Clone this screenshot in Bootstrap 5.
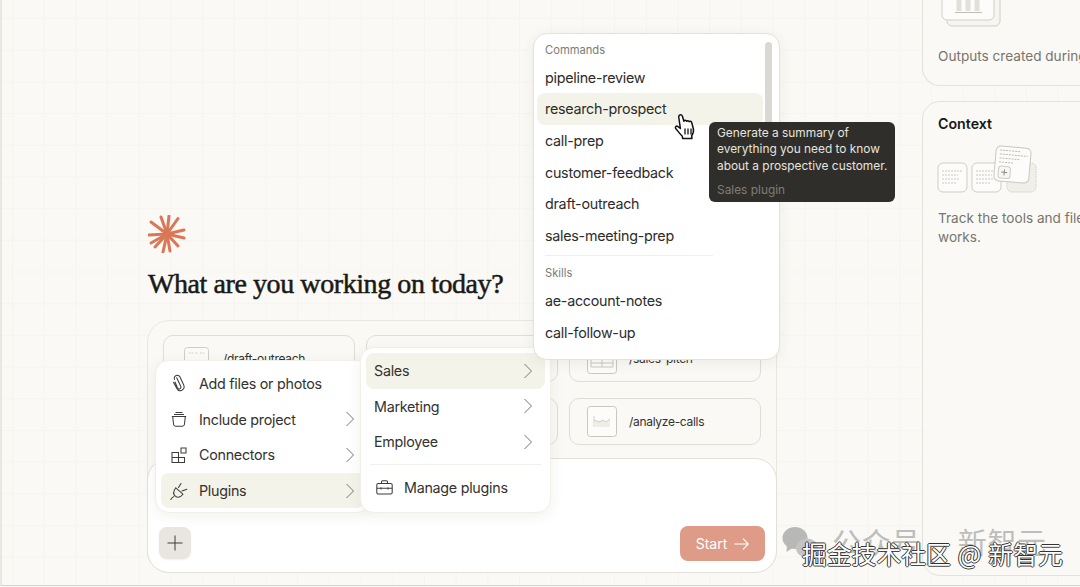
<!doctype html>
<html lang="en">
<head>
<meta charset="utf-8">
<title>What are you working on today?</title>
<link rel="stylesheet" href="https://cdn.jsdelivr.net/npm/bootstrap@5.3.0/dist/css/bootstrap.min.css">
<style>
html,body{height:587px;overflow:hidden}
body{background:#faf9f5;font-family:Inter,"Noto Sans",sans-serif;color:#2b2a27}
.page{width:1080px;height:586px;border-left:2px solid #e9e7e1;border-bottom:1px solid #d6d4ce;overflow:hidden;position:relative;
 background-color:#faf9f5;
 background-image:linear-gradient(#f5f4ef 1.2px,transparent 1.2px),linear-gradient(90deg,#f5f4ef 1.2px,transparent 1.2px);
 background-size:31.7px 31.7px;background-position:10px 18px}
.left-col{width:920px;padding-left:145px;flex:none}
.star{display:block;width:38px;height:38px;margin:215px 0 0 1px}
.hero-title{font-family:"Liberation Serif",serif;font-size:28px;line-height:34px;font-weight:400;color:#191917;margin:14px 0 0 1px;letter-spacing:-.42px;-webkit-text-stroke:.5px #191917}
.panel{width:630px;margin-top:19px;border:1px solid #e9e7e0;border-radius:22px;background:#faf9f5;position:relative}
.tiles{display:grid;grid-template-columns:repeat(3,192px);column-gap:11px;row-gap:16px;padding:14px 15px 13px 15px}
.tile{height:47px;border:1px solid #dfddd6;border-radius:10px;display:flex;align-items:center;gap:12px;padding-left:17px;font-size:12px;letter-spacing:-.3px;color:#33322f}
.tile svg{flex:none}
.composer{height:115px;margin:0 -1px -1px;background:#fff;border:1px solid #e2e0d9;border-radius:22px;padding:68px 11px 0;display:flex;justify-content:space-between;align-items:flex-start}
.plus-btn{width:32px;height:32px;background:#e9e6df;border-radius:8px;display:flex;align-items:center;justify-content:center;box-shadow:0 1px 2px rgba(0,0,0,.06)}
.start-btn{width:85px;height:35px;background:#de9c88;border:0;border-radius:8px;color:#fff;font-size:14px;display:flex;align-items:center;justify-content:center;gap:7px;margin-top:-1px;padding:0}
.pop{position:absolute;background:#fff;border-radius:14px;box-shadow:0 3px 14px rgba(60,50,30,.07);border:1px solid #f1efe9}
.menu-a{left:7px;top:39px;width:216px;height:153px;padding:5px;z-index:2}
.menu-b{left:212px;top:26px;width:191px;height:166px;padding:5px;z-index:3}
.menu-c{left:385px;top:-288px;width:247px;height:327px;border-color:#e4e2db;z-index:4;padding:7.5px 3px 7px}
.mi{height:35.6px;border-radius:8px;display:flex;align-items:center;font-size:14.3px;color:#33322f;letter-spacing:-.27px}
.mi-a{padding:0 10px 0 8px;gap:10px}
.mi-a .lbl{flex-grow:1}
.mi-b{padding:0 12px 0 8px;justify-content:space-between}
.hl{background:#f4f3ea}
.sub-div{height:1px;background:#f1efea;margin:4px 4px 5px}
.manage{height:36px;padding-left:10px;gap:11px;justify-content:flex-start}
.cmd-head{font-size:11.2px;line-height:16px;color:#7d7b74;padding-left:8px}
.cmd{height:31.7px;font-size:14.3px;letter-spacing:-.26px;display:flex;align-items:center;padding-left:8px;width:226px;border-radius:8px;color:#2d2c29}
.cmd-div{height:1px;background:#f1efea;width:168px;margin:3.500px 0 9px 8px}
.sbar{position:absolute;right:7px;top:8px;width:7px;height:100px;background:#d9d8d3;border-radius:4px}
.tip{position:absolute;left:175px;top:88px;width:186px;height:80px;background:#2f2e2b;border-radius:6px;color:#e6e4de;font-size:11.9px;line-height:16.4px;padding:3px 8px;z-index:5;white-space:nowrap}
.tip .src{color:#7f7d77;margin-top:8px}
.hand{position:absolute;left:139px;top:79px;z-index:6}
.right-col{width:400px;flex:none}
.side{background:#faf9f5;border:1px solid #e4e2db;border-radius:18px;padding:0 15px;width:300px}
.side-top{height:86px;border-top:0;border-top-left-radius:0;border-top-right-radius:0}
.side-main{height:475px;margin-top:15px;padding-top:13px}
.side-title{font-size:14.2px;font-weight:600;color:#171715;line-height:18px}
.side-text{font-size:13.6px;line-height:19.2px;color:#77756e;white-space:nowrap}
.side-top .side-text{margin-top:19px}
.side-main .side-text{margin-top:14px}
.side-top svg,.side-main svg{display:block}
.side-top svg{margin-left:2px}
.side-main svg{margin-top:12px;margin-left:-1px}
.wm{position:absolute;left:0;top:0;width:0;height:0;z-index:9}
.wm-gray{position:absolute;left:830px;top:521px;font-family:"Noto Sans CJK SC",sans-serif;font-size:29px;line-height:40px;color:#bdbdbc;white-space:nowrap;letter-spacing:.6px}
.wm-gray span{margin-left:37px}
.wm-main{position:absolute;left:800px;top:537px;font-family:"Noto Sans CJK SC",sans-serif;font-size:24.8px;line-height:32px;word-spacing:1.5px;color:#fff;white-space:nowrap;text-shadow:-1px 0 #333,1px 0 #333,0 -1px #333,0 1px #444}
.wm svg{position:absolute;left:780px;top:525px}
</style>
</head>
<body>
<div class="page d-flex">
 <div class="left-col">
  <svg class="star" viewBox="0 0 38 38" aria-hidden="true"><g stroke="#d97757" stroke-width="3" stroke-linecap="round"><line x1="19" y1="19" x2="13" y2="2"/><line x1="19" y1="19" x2="21" y2="1"/><line x1="19" y1="19" x2="30" y2="3.5"/><line x1="19" y1="19" x2="36" y2="15"/><line x1="19" y1="19" x2="36" y2="23"/><line x1="19" y1="19" x2="30" y2="31"/><line x1="19" y1="19" x2="22" y2="36"/><line x1="19" y1="19" x2="15" y2="37"/><line x1="19" y1="19" x2="7" y2="32"/><line x1="19" y1="19" x2="1" y2="20"/><line x1="19" y1="19" x2="3" y2="7"/><line x1="19" y1="19" x2="3" y2="28"/></g></svg>
  <h1 class="hero-title">What are you working on today?</h1>
  <div class="panel">
   <div class="tiles">
    <div class="tile"><svg width="30" height="30" viewBox="0 0 30 30" fill="none" stroke="#cfcdc6"><path d="M.5 20l3-4V6.500a3 3 0 0 1 3-3h18a3 3 0 0 1 3 3V16l2 4z" fill="#fbfaf7"/><path d="M8 9h4M14 9h3M19 9h4" stroke-dasharray="1.5 1"/></svg><span>/draft-outreach</span></div>
    <div class="tile"></div>
    <div class="tile"><svg width="30" height="31" viewBox="0 0 30 31" fill="none" stroke="#c9c7c0"><rect x=".5" y=".5" width="29" height="30" rx="3" fill="#fdfcfa"/><path d="M4 10h22v14H4zM4 15h22M4 20h22M15 15v9"/></svg><span>/sales-pitch</span></div>
    <div class="tile"></div>
    <div class="tile"></div>
    <div class="tile"><svg width="30" height="31" viewBox="0 0 30 31" fill="none" stroke="#c9c7c0"><rect x=".5" y=".5" width="29" height="30" rx="3" fill="#fdfcfa"/><path d="M7 21V10" stroke="#d5d3cd"/><path d="M7 21V14l5 2 4-2 3 2 4-3v8z" fill="#eeede8" stroke="none"/><path d="M7 14l5 2 4-2 3 2 4-3" stroke="#d0cec8"/></svg><span>/analyze-calls</span></div>
   </div>
   <div class="composer">
    <div class="plus-btn"><svg width="16" height="16" viewBox="0 0 16 16" stroke="#3d3d3a" fill="none"><path d="M8 .5v15M.5 8h15"/></svg></div>
    <button class="start-btn" type="button">Start <svg width="15" height="12" viewBox="0 0 15 12" fill="none" stroke="#fff" stroke-width="1.1"><path d="M.5 6h14M9 .7 14.3 6 9 11.3"/></svg></button>
   </div>

   <div class="pop menu-a">
    <div class="mi mi-a"><svg width="20" height="20" viewBox="0 0 20 20" fill="none" stroke="#3d3d3a" stroke-width="1.05" stroke-linecap="round"><path d="M5.600 5.400c-.9-1.700.2-3.300 1.600-3.900 1.500-.6 3 0 3.800 1.600l3.600 7.600c1 2.200.3 4.600-1.700 5.600-2 .9-4.300 0-5.300-2.200L4.500 8.300M7.700 3.800l4 8.400c.5 1.100.1 2.200-.8 2.600-1 .4-2-.1-2.500-1.100L6 8"/></svg><span class="lbl">Add files or photos</span></div>
    <div class="mi mi-a"><svg width="20" height="20" viewBox="0 0 20 20" fill="none" stroke="#3d3d3a" stroke-width="1.05"><path d="M2.800 7.500h14.400M3.700 7.500l.9 8a2 2 0 0 0 2 1.700h6.800a2 2 0 0 0 2-1.700l.9-8M5 5.500h10M6.500 3.500h7"/></svg><span class="lbl">Include project</span><svg width="10" height="16" viewBox="0 0 10 16" fill="none" stroke="#77756e"><path d="M1.500 1 8.500 8l-7 7"/></svg></div>
    <div class="mi mi-a"><svg width="20" height="20" viewBox="0 0 20 20" fill="none" stroke="#3d3d3a" stroke-width="1.05"><path d="M3 7.500h6.500v10H3zM3 12.500h12.500v5H9.500M9.500 12.500V17M12 3h5v5h-5z"/></svg><span class="lbl">Connectors</span><svg width="10" height="16" viewBox="0 0 10 16" fill="none" stroke="#77756e"><path d="M1.500 1 8.500 8l-7 7"/></svg></div>
    <div class="mi mi-a hl"><svg width="20" height="20" viewBox="0 0 20 20" fill="none" stroke="#3d3d3a" stroke-width="1.05" stroke-linecap="round"><path d="M1.800 18.500c1-1.800 1.800-2.300 3-2.900M6.800 6.800l7.200 6.400c-2.200 2.800-5.300 3.800-7.700 2-2.300-1.800-1.900-5.200.5-8.400zM9.500 6.500l2.500-4M13 10l4.800-1.700"/></svg><span class="lbl">Plugins</span><svg width="10" height="16" viewBox="0 0 10 16" fill="none" stroke="#77756e"><path d="M1.500 1 8.500 8l-7 7"/></svg></div>
   </div>

   <div class="pop menu-b">
    <div class="mi mi-b hl">Sales<svg width="10" height="16" viewBox="0 0 10 16" fill="none" stroke="#77756e"><path d="M1.500 1 8.500 8l-7 7"/></svg></div>
    <div class="mi mi-b">Marketing<svg width="10" height="16" viewBox="0 0 10 16" fill="none" stroke="#77756e"><path d="M1.500 1 8.500 8l-7 7"/></svg></div>
    <div class="mi mi-b">Employee<svg width="10" height="16" viewBox="0 0 10 16" fill="none" stroke="#77756e"><path d="M1.500 1 8.500 8l-7 7"/></svg></div>
    <div class="sub-div"></div>
    <div class="mi manage"><svg width="17" height="15" viewBox="0 0 17 15" fill="none" stroke="#3d3d3a" stroke-width="1.05"><rect x=".8" y="3.500" width="15.400" height="10.500" rx="1.500"/><path d="M5.500 3.500V1.800a1 1 0 0 1 1-1h4a1 1 0 0 1 1 1v1.700M.8 8.300h15.400M5 7.200v2.300M12 7.200v2.300"/></svg>Manage plugins</div>
   </div>

   <div class="pop menu-c">
    <div class="sbar"></div>
    <div class="cmd-head">Commands</div>
    <div class="cmd mt-1">pipeline-review</div>
    <div class="cmd hl">research-prospect</div>
    <div class="cmd">call-prep</div>
    <div class="cmd">customer-feedback</div>
    <div class="cmd">draft-outreach</div>
    <div class="cmd">sales-meeting-prep</div>
    <div class="cmd-div"></div>
    <div class="cmd-head">Skills</div>
    <div class="cmd mt-1">ae-account-notes</div>
    <div class="cmd">call-follow-up</div>
    <div class="tip">Generate a summary of<br>everything you need to know<br>about a prospective customer.<div class="src">Sales plugin</div></div>
    <svg class="hand" width="24" height="27" viewBox="0 0 24 27" aria-hidden="true"><path d="M6.500 2.200c1.200-1 2.500-.3 2.900 1l1.500 5c.4-1.300 2.200-1.200 2.700.1.500-1 2.100-.8 2.600.3.700-.7 2-.4 2.400.6l1.700 6.300c.7 3-.2 5.500-1.600 7.300l.3 2.700H9.700l-.5-2.500c-1.800-1.400-4.300-4.800-6.500-7.500-1-1.300.6-3 2-2.200l2.700 2.200L5.800 4.500c-.2-.9 0-1.800.7-2.300z" fill="#fff" stroke="#111" stroke-width="1.500" stroke-linejoin="round"/><path d="M12 15.500v6M15 15.500v6M18 15.500v6" stroke="#111" stroke-width="1.300"/></svg>
   </div>
  </div>
 </div>
 <div class="right-col">
  <div class="side side-top">
   <svg width="62" height="28" viewBox="0 0 62 28" fill="none" stroke="#d0cec7"><rect x="7" y="-8" width="53" height="34" rx="5" fill="#f6f5f0"/><rect x="2" y="-12" width="52" height="32" rx="5" fill="#fdfcfa"/><path d="M19 0v11M28 0v11M37 0v11" stroke="#e2e0da" stroke-width="5"/><path d="M15 12.500h27" stroke="#bdbbb4"/></svg>
   <div class="side-text">Outputs created during</div>
  </div>
  <div class="side side-main">
   <div class="side-title">Context</div>
   <svg width="104" height="50" viewBox="0 0 104 50" fill="none" stroke="#cfcdc6"><rect x="1" y="18" width="29" height="29" rx="5" fill="#fdfcfa"/><path d="M5 26h20M5 30h16M5 34h18M5 38h14" stroke="#c9c7c0" stroke-dasharray="2 1"/><rect x="35" y="18" width="29" height="29" rx="5" fill="#fdfcfa"/><path d="M39 26h20M39 30h16M39 34h18M39 38h14" stroke="#c9c7c0" stroke-dasharray="2 1"/><rect x="70" y="18" width="29" height="29" rx="5" fill="#f0efe9" stroke-dasharray="1.500 1"/><g transform="rotate(5 75 19)"><rect x="58" y="2" width="35" height="35" rx="5" fill="#fdfcfa" stroke="#c9c7c0"/><path d="M62 6h20M62 10h28M62 14h20M62 18h14" stroke="#bbb9b2" stroke-dasharray="2 1"/><rect x="62" y="22" width="12" height="12" rx="3" fill="#f7f6f2"/><path d="M68 25v6M65 28h6" stroke="#8d8b85"/></g></svg>
   <div class="side-text">Track the tools and files<br>works.</div>
  </div>
 </div>
 <div class="wm">
  <svg width="40" height="36" viewBox="0 0 40 36" aria-hidden="true"><ellipse cx="13" cy="13" rx="12.500" ry="11" fill="#b8b8b7"/><path d="M5 20l-.5 7 6-4z" fill="#b8b8b7"/><ellipse cx="25" cy="23" rx="11" ry="9.500" fill="#c4c4c3"/></svg>
  <div class="wm-gray">公众号<span>新智元</span></div>
  <div class="wm-main">掘金技术社区 @ 新智元</div>
 </div>
</div>
</body>
</html>
